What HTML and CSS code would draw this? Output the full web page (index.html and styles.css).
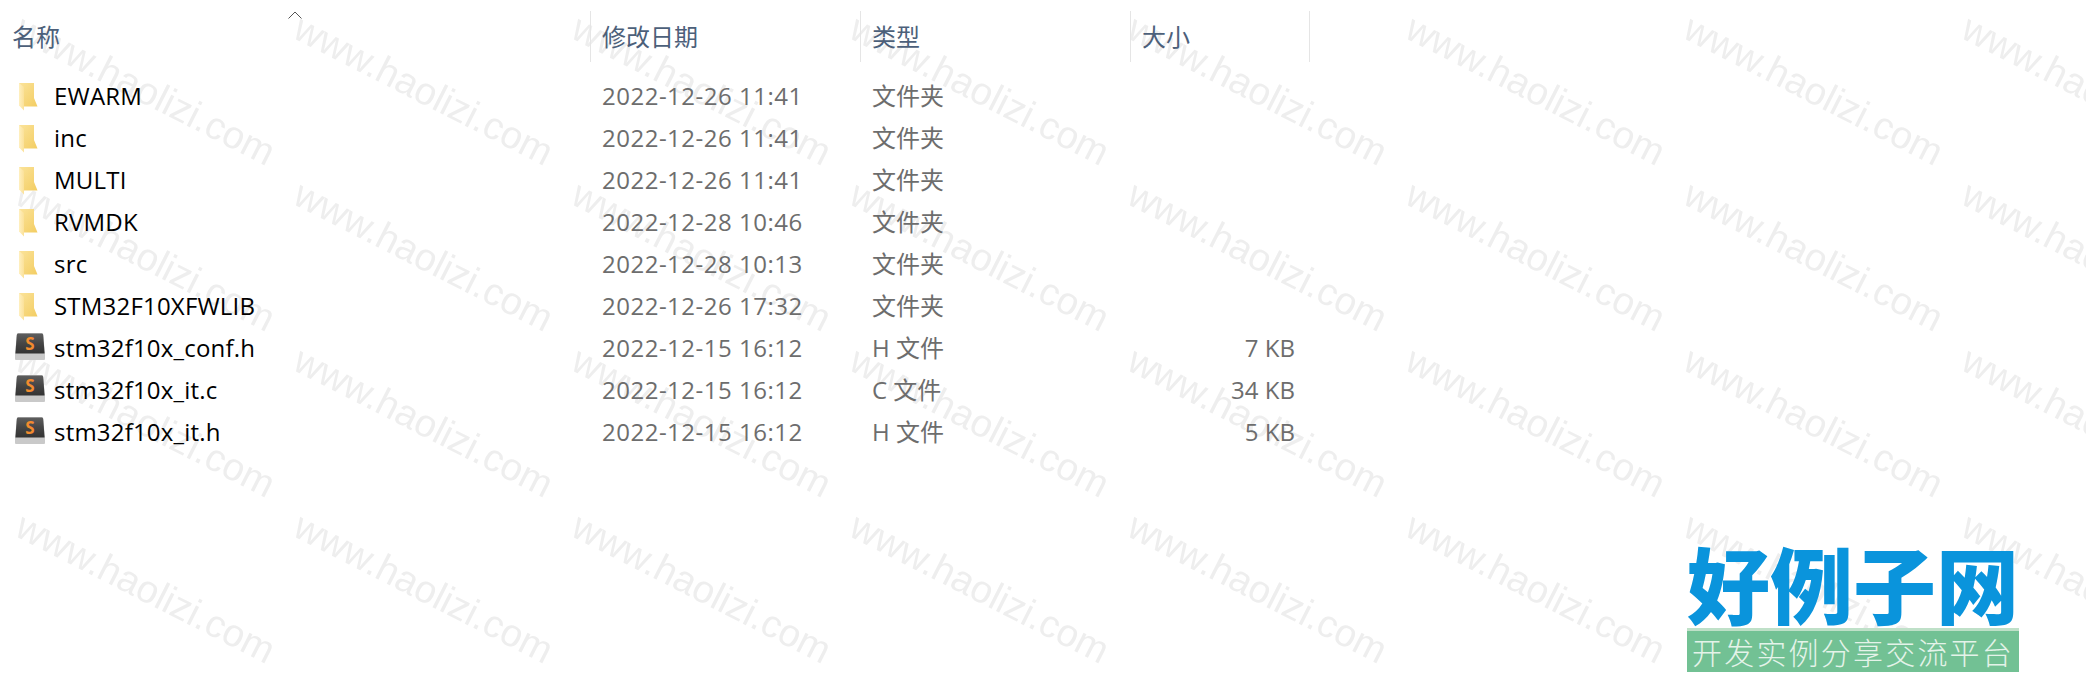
FILE: index.html
```html
<!DOCTYPE html>
<html lang="zh-CN">
<head>
    <meta charset="UTF-8">
    <title>文件列表</title>
    <link rel="stylesheet" href="styles.css">
</head>
<body>
    <svg class="watermark" width="2086" height="682">
        <defs>
            <pattern id="wm" x="11" y="17" width="278" height="166" patternUnits="userSpaceOnUse">
                <text x="2" y="20" transform="rotate(27 2 20)" class="wm-text">www.haolizi.com</text>
            </pattern>
            <linearGradient id="folderBody" x1="0" y1="0" x2="1" y2="1">
                <stop offset="0" stop-color="#fbe39a"/>
                <stop offset="1" stop-color="#f3cd62"/>
            </linearGradient>
            <linearGradient id="folderFlap" x1="0" y1="0" x2="1" y2="0">
                <stop offset="0" stop-color="#fff0c0"/>
                <stop offset="1" stop-color="#fbe199"/>
            </linearGradient>
            <linearGradient id="keyFace" x1="0" y1="0" x2="0" y2="1">
                <stop offset="0" stop-color="#5e5e5e"/>
                <stop offset="0.5" stop-color="#454545"/>
                <stop offset="1" stop-color="#333"/>
            </linearGradient>
            <symbol id="folder" viewBox="0 0 19 28">
                <path d="M0 0H15V15L18.500 23.500H5Z" fill="url(#folderBody)"/>
                <path d="M0 0L5 4V27.500L0 22.500Z" fill="url(#folderFlap)"/>
            </symbol>
            <symbol id="sublime" viewBox="0 0 30 27">
                <path d="M3 0H27Q28 0 28.300 2L30 22V26Q30 27 29 27H1Q0 27 0 26V22L1.700 2Q2 0 3 0Z" fill="#c9c9c9"/>
                <path d="M3 .5H27Q28 .5 28.200 2L29.600 20.500H.4L1.800 2Q2 .5 3 .5Z" fill="url(#keyFace)"/>
                <text x="15" y="17" class="key-letter">S</text>
            </symbol>
        </defs>
        <rect width="2086" height="682" fill="url(#wm)"/>
    </svg>

    <div class="list">
        <div class="head">
            <div class="col">名称</div>
            <div class="col sep">修改日期</div>
            <div class="col sep">类型</div>
            <div class="col sep last">大小</div>
        </div>
        <svg class="sort-arrow" width="14" height="8" viewBox="0 0 14 8"><path d="M.5 7.500L7 1L13.500 7.500" fill="none" stroke="#555" stroke-width="1"/></svg>

        <div class="rows">
            <div class="row">
                <div class="name"><span class="icon"><svg class="ic-folder"><use href="#folder"/></svg></span>EWARM</div>
                <div class="date">2022-12-26 11:41</div>
                <div class="type">文件夹</div>
                <div class="size"></div>
            </div>
            <div class="row">
                <div class="name"><span class="icon"><svg class="ic-folder"><use href="#folder"/></svg></span>inc</div>
                <div class="date">2022-12-26 11:41</div>
                <div class="type">文件夹</div>
                <div class="size"></div>
            </div>
            <div class="row">
                <div class="name"><span class="icon"><svg class="ic-folder"><use href="#folder"/></svg></span>MULTI</div>
                <div class="date">2022-12-26 11:41</div>
                <div class="type">文件夹</div>
                <div class="size"></div>
            </div>
            <div class="row">
                <div class="name"><span class="icon"><svg class="ic-folder"><use href="#folder"/></svg></span>RVMDK</div>
                <div class="date">2022-12-28 10:46</div>
                <div class="type">文件夹</div>
                <div class="size"></div>
            </div>
            <div class="row">
                <div class="name"><span class="icon"><svg class="ic-folder"><use href="#folder"/></svg></span>src</div>
                <div class="date">2022-12-28 10:13</div>
                <div class="type">文件夹</div>
                <div class="size"></div>
            </div>
            <div class="row">
                <div class="name"><span class="icon"><svg class="ic-folder"><use href="#folder"/></svg></span>STM32F10XFWLIB</div>
                <div class="date">2022-12-26 17:32</div>
                <div class="type">文件夹</div>
                <div class="size"></div>
            </div>
            <div class="row">
                <div class="name"><span class="icon"><svg class="ic-file"><use href="#sublime"/></svg></span>stm32f10x_conf.h</div>
                <div class="date">2022-12-15 16:12</div>
                <div class="type">H 文件</div>
                <div class="size">7 KB</div>
            </div>
            <div class="row">
                <div class="name"><span class="icon"><svg class="ic-file"><use href="#sublime"/></svg></span>stm32f10x_it.c</div>
                <div class="date">2022-12-15 16:12</div>
                <div class="type">C 文件</div>
                <div class="size">34 KB</div>
            </div>
            <div class="row">
                <div class="name"><span class="icon"><svg class="ic-file"><use href="#sublime"/></svg></span>stm32f10x_it.h</div>
                <div class="date">2022-12-15 16:12</div>
                <div class="type">H 文件</div>
                <div class="size">5 KB</div>
            </div>
        </div>
    </div>

    <div class="logo">
        <div class="logo-title">好例子网</div>
        <div class="logo-bar">开发实例分享交流平台</div>
    </div>
</body>
</html>
```

FILE: styles.css
```css
body {
    position: relative;
    width: 2086px;
    height: 682px;
    margin: 0;
    overflow: hidden;
    background-color: white;
    font-family: "Open Sans", "Noto Sans CJK SC", sans-serif;
    font-size: 24px;
}

/* watermark sits behind everything */
.watermark {
    position: absolute;
    top: 0;
    left: 0;
}
.wm-text {
    font-family: "Liberation Sans", sans-serif;
    font-size: 38.500px;
    fill: #eeeeee;
}

.list {
    position: relative;
    width: 1310px;
    padding-top: 11px;
}

.head, .row {
    display: grid;
    grid-template-columns: 590px 270px 270px 180px;
}
.head {
    height: 51px;
    color: #4c607a;
}
.col {
    padding-left: 12px;
    line-height: 50px;
    font-family: "Noto Sans CJK SC", sans-serif;
}
.sep {
    border-left: 1px solid #e5e5e5;
    padding-left: 11px;
}
.last {
    border-right: 1px solid #e5e5e5;
}

.sort-arrow {
    position: absolute;
    top: 11px;
    left: 288px;
}

.rows {
    margin-top: 13px;
}
.row {
    height: 42px;
    line-height: 42px;
    align-items: center;
}
.name {
    display: flex;
    align-items: center;
    padding-left: 15px;
    color: black;
    letter-spacing: 0.200px;
}
.icon {
    display: flex;
    align-items: center;
    width: 30px;
    margin-right: 9px;
}
.ic-folder {
    width: 19px;
    height: 28px;
    margin-left: 4px;
    margin-top: 2px;
}
.ic-file {
    width: 30px;
    height: 27px;
    margin-bottom: 4px;
}
.key-letter {
    font-family: "Open Sans", sans-serif;
    font-size: 17px;
    font-weight: 700;
    fill: #f28b2e;
    text-anchor: middle;
}

.date, .type, .size {
    color: #6d6d6d;
}
.date, .type {
    padding-left: 12px;
}
.date {
    letter-spacing: 0.500px;
}
.size {
    padding-right: 15px;
    text-align: right;
}

.logo {
    position: absolute;
    top: 540px;
    left: 1687px;
    width: 332px;
}
.logo-title {
    height: 88px;
    line-height: 84px;
    text-align: center;
    font-family: "Noto Sans CJK SC", sans-serif;
    font-size: 83px;
    font-weight: 900;
    color: #0a94dc;
    white-space: nowrap;
}
.logo-bar {
    height: 41px;
    line-height: 41px;
    border-top: 3px solid #bfe0c8;
    background-color: #72c194;
    color: #e4f3e9;
    font-family: "Noto Sans CJK SC", sans-serif;
    font-size: 30px;
    font-weight: 300;
    letter-spacing: 2.200px;
    text-align: center;
    white-space: nowrap;
}
```
